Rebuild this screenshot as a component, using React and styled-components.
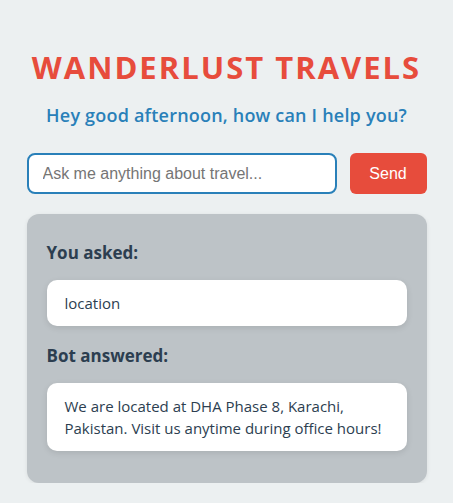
import React, { useState } from 'react';
import styled, { createGlobalStyle } from 'styled-components';

const GlobalStyle = createGlobalStyle`
  body {
    margin: 0;
    background-color: #ecf0f1;
    font-family: 'Open Sans', 'Noto Sans', sans-serif;
  }
`;

const App = () => {
  const [question, setQuestion] = useState('');

  return (
    <>
      <GlobalStyle />
      <Container>
        <Title>WANDERLUST TRAVELS</Title>
        <Greeting>Hey good afternoon, how can I help you?</Greeting>
        <Form onSubmit={(e) => e.preventDefault()}>
          <Input
            value={question}
            onChange={(e) => setQuestion(e.target.value)}
            placeholder="Ask me anything about travel..."
          />
          <SendButton type="submit">Send</SendButton>
        </Form>
        <ChatPanel>
          <Label>You asked:</Label>
          <Bubble>location</Bubble>
          <Label>Bot answered:</Label>
          <Bubble>We are located at DHA Phase 8, Karachi, Pakistan. Visit us anytime during office hours!</Bubble>
        </ChatPanel>
      </Container>
    </>
  );
};

export default App;

const Container = styled.div`
  max-width: 400px;
  margin: 0 auto;
  padding-top: 46px;
`;

const Title = styled.h1`
  margin: 0;
  font-size: 31px;
  font-weight: 700;
  letter-spacing: 2px;
  color: #e74c3c;
  text-align: center;
`;

const Greeting = styled.p`
  margin: 15px 0 0;
  font-size: 18px;
  font-weight: 600;
  letter-spacing: 0.2px;
  color: #2980b9;
  text-align: center;
`;

const Form = styled.form`
  display: flex;
  gap: 13px;
  margin-top: 26px;
`;

const Input = styled.input`
  flex: 1;
  height: 41px;
  box-sizing: border-box;
  padding: 0 14px;
  border: 2px solid #2980b9;
  border-radius: 8px;
  background: #fff;
  font-family: 'Liberation Sans', Arial, sans-serif;
  font-size: 16px;
  outline: none;

  &::placeholder {
    color: #757575;
  }
`;

const SendButton = styled.button`
  width: 77px;
  height: 41px;
  border: none;
  border-radius: 6px;
  background: #e74c3c;
  color: #fff;
  font-family: 'Liberation Sans', Arial, sans-serif;
  font-size: 16px;
  cursor: pointer;
`;

const ChatPanel = styled.div`
  margin-top: 20px;
  padding: 20px 20px 32px;
  background: #bdc3c7;
  border-radius: 12px;
  box-shadow: 0 1px 4px rgba(0, 0, 0, 0.08);
`;

const Label = styled.h3`
  margin: 7px 0 16px;
  font-size: 17px;
  font-weight: 700;
  color: #2c3e50;

  & + div + & {
    margin-top: 18px;
  }
`;

const Bubble = styled.div`
  padding: 12px 18px;
  background: #fff;
  border-radius: 10px;
  box-shadow: 0 2px 6px rgba(0, 0, 0, 0.1);
  font-size: 15px;
  line-height: 22px;
  color: #2c3e50;
`;
